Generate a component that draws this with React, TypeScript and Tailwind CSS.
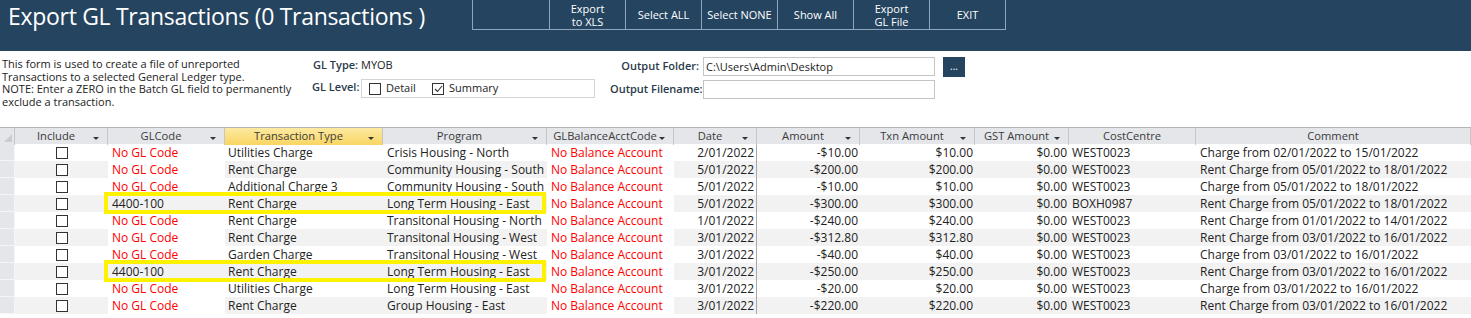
import React from "react";

type Row = {
  gl: string;
  type: string;
  program: string;
  date: string;
  amount: string;
  txn: string;
  cost: string;
  comment: string;
};

const rows: Row[] = [
  { gl: "No GL Code", type: "Utilities Charge", program: "Crisis Housing - North", date: "2/01/2022", amount: "-$10.00", txn: "$10.00", cost: "WEST0023", comment: "Charge from 02/01/2022 to 15/01/2022" },
  { gl: "No GL Code", type: "Rent Charge", program: "Community Housing - South", date: "5/01/2022", amount: "-$200.00", txn: "$200.00", cost: "WEST0023", comment: "Rent Charge from 05/01/2022 to 18/01/2022" },
  { gl: "No GL Code", type: "Additional Charge 3", program: "Community Housing - South", date: "5/01/2022", amount: "-$10.00", txn: "$10.00", cost: "WEST0023", comment: "Charge from 05/01/2022 to 18/01/2022" },
  { gl: "4400-100", type: "Rent Charge", program: "Long Term Housing - East", date: "5/01/2022", amount: "-$300.00", txn: "$300.00", cost: "BOXH0987", comment: "Rent Charge from 05/01/2022 to 18/01/2022" },
  { gl: "No GL Code", type: "Rent Charge", program: "Transitonal Housing - North", date: "1/01/2022", amount: "-$240.00", txn: "$240.00", cost: "WEST0023", comment: "Rent Charge from 01/01/2022 to 14/01/2022" },
  { gl: "No GL Code", type: "Rent Charge", program: "Transitonal Housing - West", date: "3/01/2022", amount: "-$312.80", txn: "$312.80", cost: "WEST0023", comment: "Rent Charge from 03/01/2022 to 16/01/2022" },
  { gl: "No GL Code", type: "Garden Charge", program: "Transitonal Housing - West", date: "3/01/2022", amount: "-$40.00", txn: "$40.00", cost: "WEST0023", comment: "Charge from 03/01/2022 to 16/01/2022" },
  { gl: "4400-100", type: "Rent Charge", program: "Long Term Housing - East", date: "3/01/2022", amount: "-$250.00", txn: "$250.00", cost: "WEST0023", comment: "Rent Charge from 03/01/2022 to 16/01/2022" },
  { gl: "No GL Code", type: "Utilities Charge", program: "Long Term Housing - East", date: "3/01/2022", amount: "-$20.00", txn: "$20.00", cost: "WEST0023", comment: "Charge from 03/01/2022 to 16/01/2022" },
  { gl: "No GL Code", type: "Rent Charge", program: "Group Housing - East", date: "3/01/2022", amount: "-$220.00", txn: "$220.00", cost: "WEST0023", comment: "Rent Charge from 03/01/2022 to 16/01/2022" },
];

const cols = "grid grid-cols-[15px_93px_117px_158px_164px_127px_83px_103px_115px_94px_127px_1fr]";

const buttons = [
  ["", ""],
  ["Export", "to XLS"],
  ["Select ALL", ""],
  ["Select NONE", ""],
  ["Show All", ""],
  ["Export", "GL File"],
  ["EXIT", ""],
];

function Arrow() {
  return <span className="absolute right-[8px] top-[9px] w-0 h-0 border-l-[3px] border-r-[3px] border-t-[3px] border-l-transparent border-r-transparent border-t-[#333]" />;
}

function Head({ label, sort = true, active = false }: { label: string; sort?: boolean; active?: boolean }) {
  return (
    <div className={`relative h-[17px] border-r border-[#c6c6c6] text-center leading-[16px] text-[#3a3a3a] whitespace-nowrap ${sort ? "pr-[10px]" : ""} ${active ? "bg-gradient-to-b from-[#fde9a0] to-[#f9d560]" : ""}`}>
      {label}
      {sort && <Arrow />}
    </div>
  );
}

function Box({ checked = false }: { checked?: boolean }) {
  return (
    <span className="inline-flex items-center justify-center w-[12px] h-[12px] border border-[#333] bg-white">
      {checked && (
        <svg width="9" height="8" viewBox="0 0 9 8">
          <path d="M1 4 L3.5 6.5 L8 1" fill="none" stroke="#333" strokeWidth="1.1" />
        </svg>
      )}
    </span>
  );
}

export default function App() {
  return (
    <div className="w-[1471px] h-[318px] overflow-hidden bg-white font-['Open_Sans',sans-serif] text-[11px] text-[#222]">
      <div className="h-[51px] bg-[#254460] flex items-start">
        <div className="w-[472px] pl-[8px] pt-[1px] text-[23px] leading-[30px] text-white tracking-[-0.3px]">
          Export GL Transactions (0 Transactions )
        </div>
        <div className="flex border-l border-b border-[#8ea6bf] h-[30px]">
          {buttons.map((b, i) => (
            <div key={i} className={`${i === 0 ? "w-[77px]" : "w-[76px]"} border-r border-[#8ea6bf] flex flex-col items-center justify-center text-white text-[11px] leading-[13px]`}>
              <span>{b[0]}</span>
              {b[1] && <span>{b[1]}</span>}
            </div>
          ))}
        </div>
      </div>

      <div className="h-[76px] flex">
        <div className="w-[310px] pl-[2px] pt-[7px] leading-[12.6px] text-[#222]">
          <div>This form is used to create a file of unreported</div>
          <div>Transactions to a selected General Ledger type.</div>
          <div>NOTE: Enter a ZERO in the Batch GL field to permanently</div>
          <div>exclude a transaction.</div>
        </div>
        <div className="w-[300px] pt-[7px]">
          <div className="flex h-[14px] items-center">
            <span className="w-[51px] pl-[3px] font-semibold text-[#2b3a4a]">GL Type:</span>
            <span>MYOB</span>
          </div>
          <div className="flex mt-[7px] items-center">
            <span className="w-[51px] pl-[2px] font-semibold text-[#2b3a4a] -mt-[2px]">GL Level:</span>
            <div className="w-[234px] h-[19px] border border-[#d4d4d4] flex items-center pl-[7px]">
              <Box />
              <span className="ml-[5px] w-[46px]">Detail</span>
              <Box checked />
              <span className="ml-[5px]">Summary</span>
            </div>
          </div>
        </div>
        <div className="pt-[6px]">
          <div className="flex items-center h-[19px]">
            <span className="w-[93px] text-right pr-[4px] font-semibold text-[#2b3a4a]">Output Folder:</span>
            <div className="w-[232px] h-[19px] border border-[#c4c4c4] pl-[2px] leading-[17px]">C:\Users\Admin\Desktop</div>
            <div className="ml-[8px] w-[22px] h-[20px] bg-[#254460] text-white text-center leading-[18px] text-[10px]">...</div>
          </div>
          <div className="flex items-center h-[19px] mt-[4px]">
            <span className="w-[93px] text-right pr-[4px] font-semibold text-[#2b3a4a] whitespace-nowrap">Output Filename:</span>
            <div className="w-[232px] h-[19px] border border-[#c4c4c4]" />
          </div>
        </div>
      </div>

      <div className="relative">
        <div className={`${cols} bg-[#e4e6ea] border-t border-[#b4b4b4] h-[17px] text-[11.2px]`}>
          <div className="relative border-r border-[#c6c6c6] overflow-hidden">
            <svg className="absolute right-[2px] bottom-[3px]" width="8" height="8" viewBox="0 0 8 8">
              <path d="M8 0 L8 8 L0 8 Z" fill="#c8cbd0" />
            </svg>
          </div>
          <Head label="Include" />
          <Head label="GLCode" />
          <Head label="Transaction Type" active />
          <Head label="Program" />
          <Head label="GLBalanceAcctCode" />
          <Head label="Date" />
          <Head label="Amount" />
          <Head label="Txn Amount" />
          <Head label="GST Amount" />
          <Head label="CostCentre" sort={false} />
          <Head label="Comment" sort={false} />
        </div>

        {rows.map((r, i) => {
          const shade = i % 2 === 1 ? "bg-[#f2f2f2]" : "bg-white";
          const noGl = r.gl === "No GL Code";
          return (
            <div key={i} className={`${cols} ${shade} h-[17px] leading-[17px] whitespace-nowrap text-[12px]`}>
              <div className="bg-[#e4e6ea] border-r border-b border-[#f4f5f7]" />
              <div className="flex items-center justify-center">
                <Box />
              </div>
              <div className={`pl-[4px] ${noGl ? "bg-white text-[#ff0000]" : ""}`}>{r.gl}</div>
              <div className="pl-[3px]">{r.type}</div>
              <div className="pl-[4px]">{r.program}</div>
              <div className="pl-[4px] bg-white text-[#ff0000]">No Balance Account</div>
              <div className="text-right pr-[2px] border-r border-[#a8a8a8]">{r.date}</div>
              <div className="text-right pr-[2px]">{r.amount}</div>
              <div className="text-right pr-[2px]">{r.txn}</div>
              <div className="text-right pr-[2px]">$0.00</div>
              <div className="pl-[3px]">{r.cost}</div>
              <div className="pl-[4px]">{r.comment}</div>
            </div>
          );
        })}

        <div className="absolute left-[104px] top-[65px] w-[442px] h-[22px] border-[4px] border-[#fff200]" />
        <div className="absolute left-[104px] top-[133px] w-[442px] h-[22px] border-[4px] border-[#fff200]" />
      </div>
    </div>
  );
}
